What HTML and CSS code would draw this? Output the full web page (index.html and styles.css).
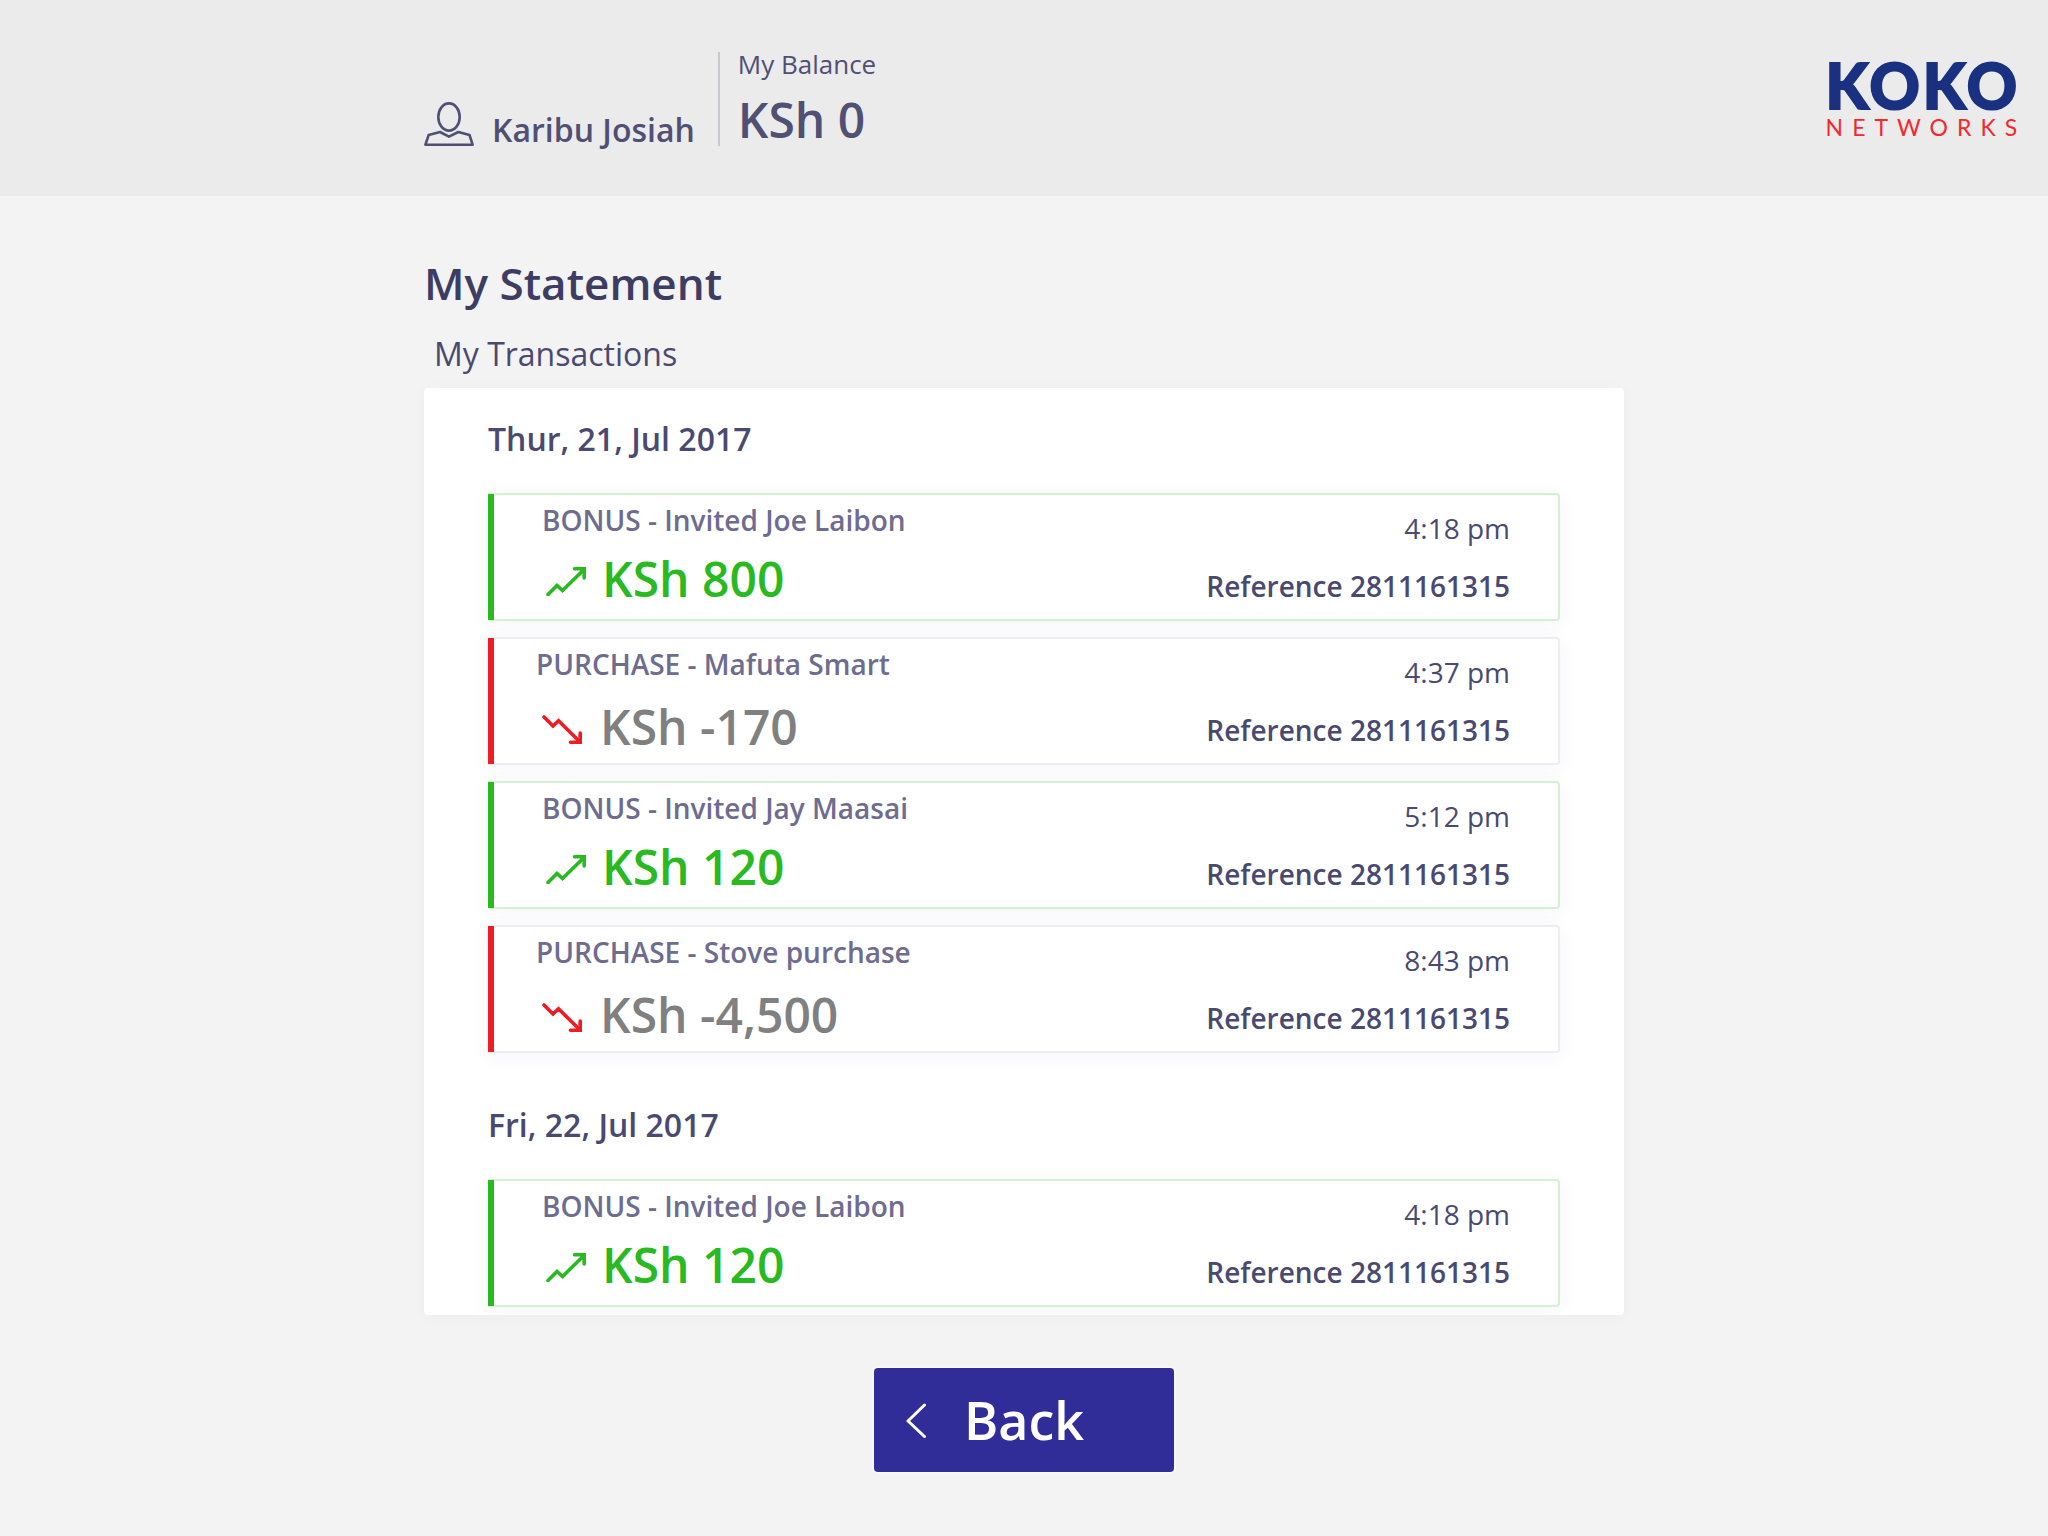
FILE: index.html
```html
<!DOCTYPE html>
<html lang="en">
<head>
<meta charset="utf-8">
<meta name="viewport" content="width=device-width, initial-scale=1">
<title>My Statement</title>
<link rel="stylesheet" href="styles.css">
</head>
<body>
<svg class="sprite" aria-hidden="true">
  <symbol id="trend-up" viewBox="0 0 40 34">
    <path d="M2 32.500L11 23.500L16.500 28.500L37.500 8M28.500 6.800H38.200V16" fill="none" stroke="currentColor" stroke-width="3.600" stroke-linecap="round" stroke-linejoin="miter"/>
  </symbol>
  <symbol id="trend-down" viewBox="0 0 40 34">
    <path d="M2 7L11 16L16.500 10.800L37.500 31.500M28.500 32.200H38.200V23" fill="none" stroke="currentColor" stroke-width="3.600" stroke-linecap="round" stroke-linejoin="miter"/>
  </symbol>
</svg>

<header class="topbar">
  <div class="account">
    <svg class="account-icon" viewBox="0 0 50 44" aria-hidden="true">
      <g fill="none" stroke="currentColor" stroke-width="2.600" stroke-linejoin="round">
        <ellipse cx="25" cy="15" rx="10.700" ry="13.600"/>
        <path d="M1.400 42.700L4.700 33L16 30L25 34.700L34.300 30L45.500 33L48.600 42.700Z"/>
      </g>
    </svg>
    <span class="account-name">Karibu Josiah</span>
    <div class="balance">
      <span class="balance-label">My Balance</span>
      <span class="balance-value">KSh 0</span>
    </div>
  </div>
  <div class="logo">
    <span class="logo-name">KOKO</span>
    <span class="logo-sub">NETWORKS</span>
  </div>
</header>

<main class="page">
  <h1 class="title">My Statement</h1>
  <h2 class="subtitle">My Transactions</h2>

  <div class="panel">
    <section class="day">
      <h3 class="day-title">Thur, 21, Jul 2017</h3>
      <ul class="entries">
        <li class="entry entry-bonus">
          <div class="entry-main">
            <span class="entry-title">BONUS - Invited Joe Laibon</span>
            <span class="amount"><svg class="trend" aria-hidden="true"><use href="#trend-up"/></svg>KSh 800</span>
          </div>
          <div class="entry-meta"><span>4:18 pm</span><span class="reference">Reference 2811161315</span></div>
        </li>
        <li class="entry entry-purchase">
          <div class="entry-main">
            <span class="entry-title">PURCHASE - Mafuta Smart</span>
            <span class="amount"><svg class="trend" aria-hidden="true"><use href="#trend-down"/></svg>KSh -170</span>
          </div>
          <div class="entry-meta"><span>4:37 pm</span><span class="reference">Reference 2811161315</span></div>
        </li>
        <li class="entry entry-bonus">
          <div class="entry-main">
            <span class="entry-title">BONUS - Invited Jay Maasai</span>
            <span class="amount"><svg class="trend" aria-hidden="true"><use href="#trend-up"/></svg>KSh 120</span>
          </div>
          <div class="entry-meta"><span>5:12 pm</span><span class="reference">Reference 2811161315</span></div>
        </li>
        <li class="entry entry-purchase">
          <div class="entry-main">
            <span class="entry-title">PURCHASE - Stove purchase</span>
            <span class="amount"><svg class="trend" aria-hidden="true"><use href="#trend-down"/></svg>KSh -4,500</span>
          </div>
          <div class="entry-meta"><span>8:43 pm</span><span class="reference">Reference 2811161315</span></div>
        </li>
      </ul>
    </section>

    <section class="day">
      <h3 class="day-title">Fri, 22, Jul 2017</h3>
      <ul class="entries">
        <li class="entry entry-bonus">
          <div class="entry-main">
            <span class="entry-title">BONUS - Invited Joe Laibon</span>
            <span class="amount"><svg class="trend" aria-hidden="true"><use href="#trend-up"/></svg>KSh 120</span>
          </div>
          <div class="entry-meta"><span>4:18 pm</span><span class="reference">Reference 2811161315</span></div>
        </li>
      </ul>
    </section>
  </div>

  <button class="back" type="button">
    <svg class="back-icon" viewBox="0 0 20 36" aria-hidden="true">
      <path d="M18.500 3L2 19L18.500 34.500" fill="none" stroke="currentColor" stroke-width="3" stroke-linecap="round" stroke-linejoin="round"/>
    </svg>
    Back
  </button>
</main>
</body>
</html>
```
FILE: styles.css
```css
*,
*::before {
  box-sizing: border-box;
}

body {
  margin: 0;
  background: #f3f3f3;
  color: #4a4a70;
  font-family: "Open Sans", "Noto Sans", sans-serif;
}

h1,
h2,
h3,
ul {
  margin: 0;
  padding: 0;
}

.sprite {
  display: none;
}

/* Header */
.topbar {
  display: grid;
  grid-template-columns: 1fr minmax(0, 1200px) 1fr;
  padding: 52px 0 50px;
  background: #ebebeb;
}

.account {
  grid-column: 2;
  display: flex;
  align-items: flex-end;
  color: #504f74;
}

.account-icon {
  width: 50px;
  height: 44px;
}

.account-name {
  margin: 0 23px 0 18px;
  font-size: 32px;
  font-weight: 600;
  line-height: 32px;
}

.balance {
  display: flex;
  flex-direction: column;
  gap: 18px;
  padding-left: 18px;
  border-left: 2px solid #c8c8d0;
}

.balance-label {
  font-size: 26px;
  line-height: 24px;
}

.balance-value {
  font-size: 48px;
  font-weight: 600;
  line-height: 52px;
}

.logo {
  justify-self: end;
  display: flex;
  flex-direction: column;
  padding: 8px 28px 0 0;
  font-family: Lato, sans-serif;
}

.logo-name {
  color: #193180;
  font-size: 62px;
  font-weight: 900;
  letter-spacing: 3px;
  line-height: 50px;
  -webkit-text-stroke: 2px #193180;
}

.logo-sub {
  color: #f4282d;
  font-size: 23px;
  letter-spacing: 9px;
  line-height: 34px;
  margin-right: -9px;
}

/* Statement */
.page {
  display: flex;
  flex-direction: column;
  max-width: 1200px;
  margin: 0 auto;
  padding: 57px 0 64px;
}

.title {
  color: #3d3c63;
  font-size: 44px;
  font-weight: 600;
  line-height: 60px;
}

.subtitle {
  margin: 19px 0 12px;
  padding-left: 10px;
  font-size: 32px;
  font-weight: 400;
  line-height: 44px;
}

.panel {
  display: flex;
  flex-direction: column;
  gap: 50px;
  padding: 29px 64px 8px;
  overflow: hidden;
  background: #fff;
  border-radius: 4px;
  box-shadow: 0 2px 16px rgba(0, 0, 0, 0.03);
}

.day-title {
  margin-bottom: 32px;
  font-size: 32px;
  font-weight: 600;
  line-height: 44px;
}

.entries {
  display: flex;
  flex-direction: column;
  gap: 16px;
  list-style: none;
}

.entry {
  display: flex;
  min-height: 128px;
  background: #fff;
  border: 2px solid;
  border-left: 0;
  border-radius: 0 4px 4px 0;
  box-shadow: 0 4px 20px rgba(60, 60, 130, 0.05);
}

.entry::before {
  content: "";
  width: 6px;
  margin: -1px 0;
}

.entry-main {
  display: flex;
  flex: 1;
  flex-direction: column;
  padding-top: 6px;
}

.entry-title {
  color: #6e6c8f;
  font-size: 28px;
  font-weight: 600;
  line-height: 38px;
}

.amount {
  display: flex;
  align-items: center;
  font-size: 48px;
  font-weight: 600;
  line-height: 60px;
}

.trend {
  width: 40px;
  height: 34px;
}

.entry-bonus {
  border-color: #d4f1d3;
}

.entry-bonus::before {
  background: #29b920;
}

.entry-bonus .entry-main {
  gap: 10px;
  padding-left: 48px;
}

.entry-bonus .amount {
  gap: 16px;
  padding-left: 4px;
  color: #29b920;
}

.entry-purchase {
  border-color: #eeeef0;
}

.entry-purchase::before {
  background: #ee1c24;
}

.entry-purchase .entry-main {
  gap: 14px;
  padding-left: 42px;
}

.entry-purchase .amount {
  gap: 18px;
  padding-left: 6px;
  color: #808080;
}

.entry-purchase .trend {
  color: #ee1c24;
}

.entry-meta {
  display: flex;
  flex-direction: column;
  gap: 20px;
  padding: 14px 48px 0 0;
  font-size: 28px;
  line-height: 38px;
  text-align: right;
}

.reference {
  font-weight: 600;
}

/* Back button */
.back {
  display: flex;
  align-items: center;
  align-self: center;
  gap: 38px;
  width: 300px;
  height: 104px;
  margin-top: 53px;
  padding: 0 32px;
  border: 0;
  border-radius: 4px;
  background: #312d98;
  box-shadow: 0 0 0 2px #f9f9fb;
  color: #fff;
  font: 600 52px/72px "Open Sans", "Noto Sans", sans-serif;
  cursor: pointer;
}

.back-icon {
  width: 20px;
  height: 36px;
}
```
